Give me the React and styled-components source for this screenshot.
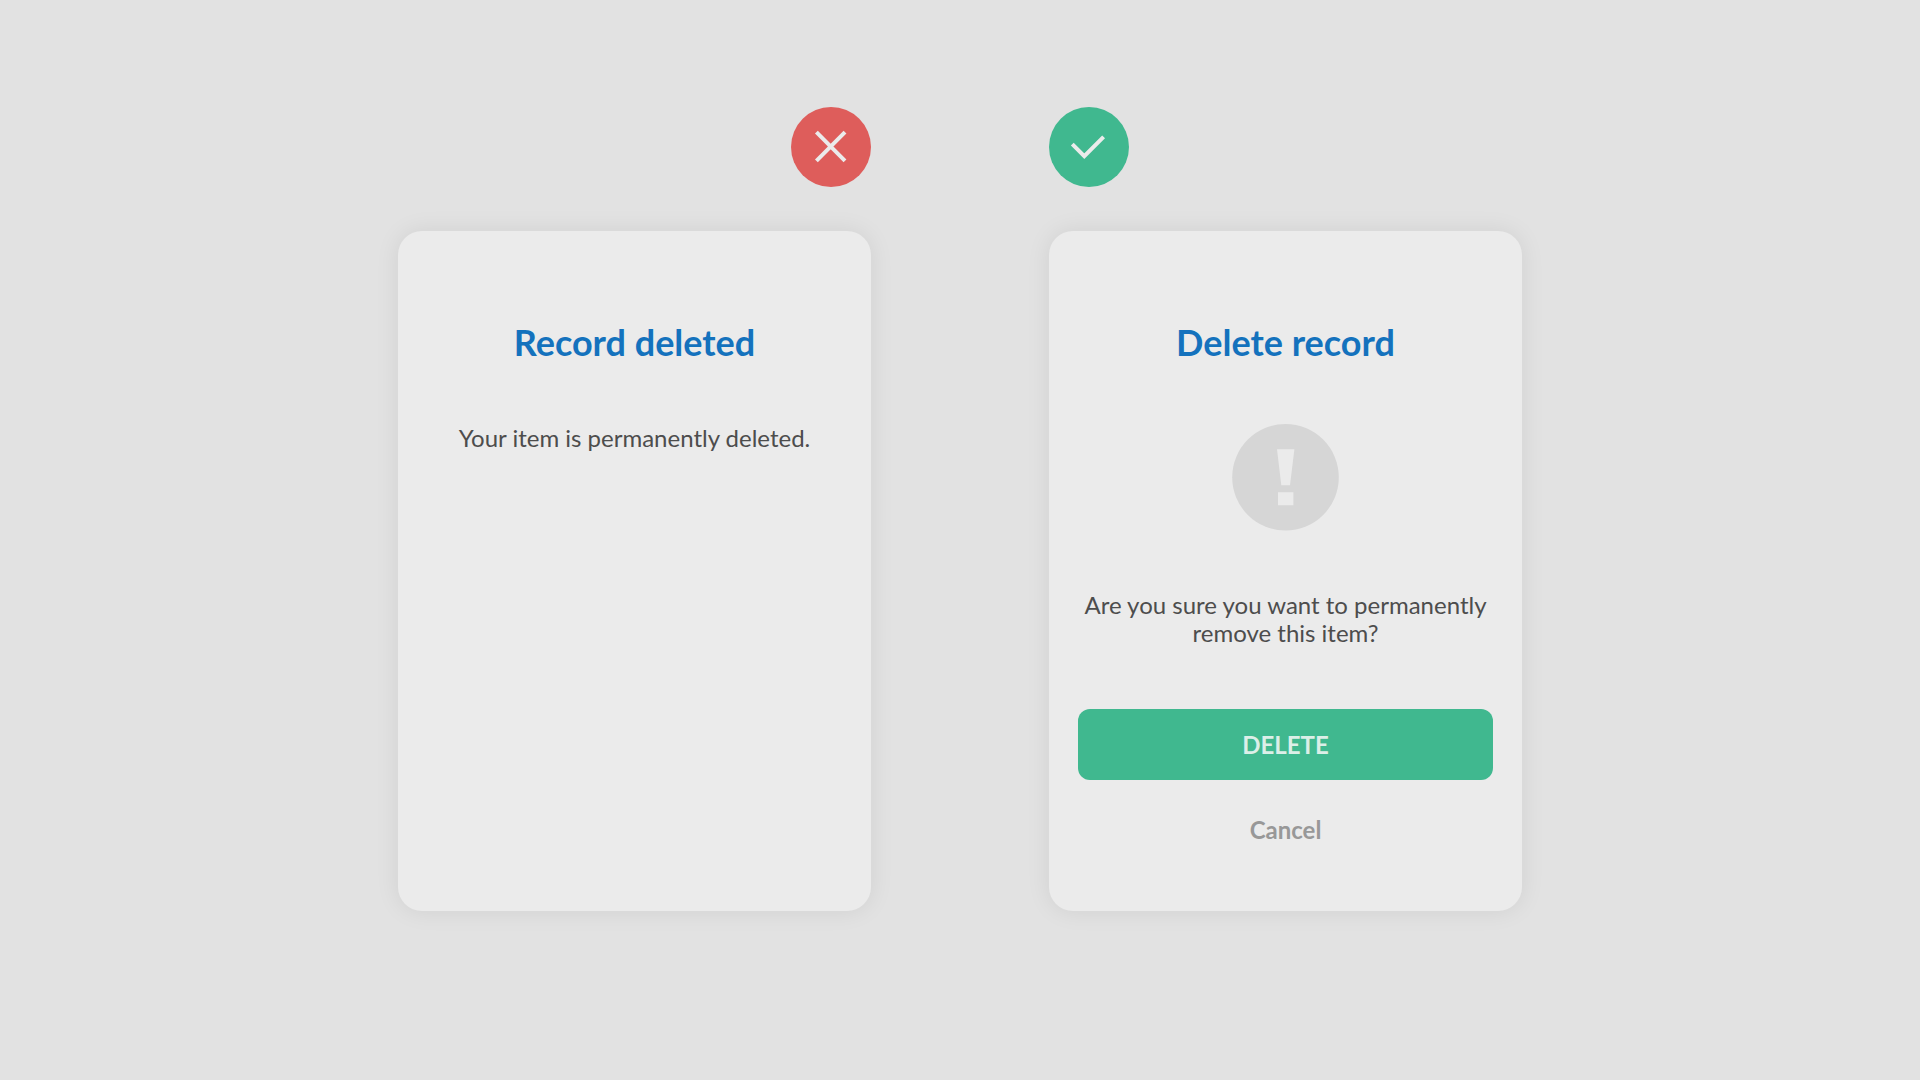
import React from 'react';
import styled, { createGlobalStyle, css } from 'styled-components';

const GlobalStyle = createGlobalStyle`
  * {
    box-sizing: border-box;
  }

  body {
    margin: 0;
    background: #e2e2e2;
    color: #4d4d4d;
    font-family: Lato, 'Liberation Sans', sans-serif;
  }
`

const Page = styled.main`
  display: flex;
  justify-content: center;
  gap: 178px;
  min-height: 100vh;
  padding: 107px 40px 60px;

  @media (max-width: 1200px) {
    gap: 40px;
  }
`

const Example = styled.section`
  display: flex;
  flex-direction: column;
  align-items: ${({ $align }) => $align};
  flex: 0 1 473px;
  gap: 44px;
`

const Mark = styled.svg`
  width: 80px;
  height: 80px;
  border-radius: 50%;
  background: ${({ $good }) => ($good ? '#40b88f' : '#de5d5b')};
  fill: none;
  stroke: #ebebeb;
  stroke-width: 4;
`

const Card = styled.article`
  display: flex;
  flex-direction: column;
  align-items: center;
  width: 100%;
  min-height: 680px;
  padding: 89px 29px 60px;
  border-radius: 24px;
  background: #ebebeb;
  box-shadow: 0 0 24px rgba(0, 0, 0, 0.08);
`

const Title = styled.h2`
  margin: 0 0 60px;
  color: #1472bd;
  font-size: 36px;
  font-weight: 700;
  line-height: 44px;
  text-align: center;
`

const Alert = styled.svg`
  width: 107px;
  height: 107px;
  margin-bottom: 60px;
`

const Message = styled.p`
  margin: 0;
  font-size: 24px;
  line-height: 28px;
  text-align: center;
`

const Actions = styled.div`
  display: flex;
  flex-direction: column;
  align-items: center;
  gap: 36px;
  width: 100%;
  margin-top: 62px;
`

const Button = styled.button`
  padding: 0;
  border: 0;
  background: none;
  color: #989898;
  font-family: inherit;
  font-size: 24px;
  font-weight: 700;
  line-height: 28px;
  cursor: pointer;
  ${({ $primary }) => $primary && css`
    width: 100%;
    height: 71px;
    border-radius: 12px;
    background: #40b88f;
    color: #dcefe8;
  `}
`

const App = () => (
  <>
    <GlobalStyle />
    <Page>
      <Example $align="flex-end">
        <Mark viewBox="0 0 80 80" aria-hidden="true">
          <path d="M25.4 25.2 54 53.8M54 25.2 25.4 53.8" />
        </Mark>
        <Card>
          <Title>Record deleted</Title>
          <Message>Your item is permanently deleted.</Message>
        </Card>
      </Example>
      <Example $align="flex-start">
        <Mark $good viewBox="0 0 80 80" aria-hidden="true">
          <path d="M23.3 37.2 35.3 49.2 54.6 29.9" />
        </Mark>
        <Card>
          <Title>Delete record</Title>
          <Alert viewBox="0 0 107 107" aria-hidden="true">
            <circle cx="53.5" cy="53.3" r="53.3" fill="#d6d6d6" />
            <path d="M45 25.2h17.4L58 61.2h-8.7zM46 68.2h15.4v13H46z" fill="#ebebeb" />
          </Alert>
          <Message>Are you sure you want to permanently remove this item?</Message>
          <Actions>
            <Button $primary type="button">DELETE</Button>
            <Button type="button">Cancel</Button>
          </Actions>
        </Card>
      </Example>
    </Page>
  </>
);

export default App;
